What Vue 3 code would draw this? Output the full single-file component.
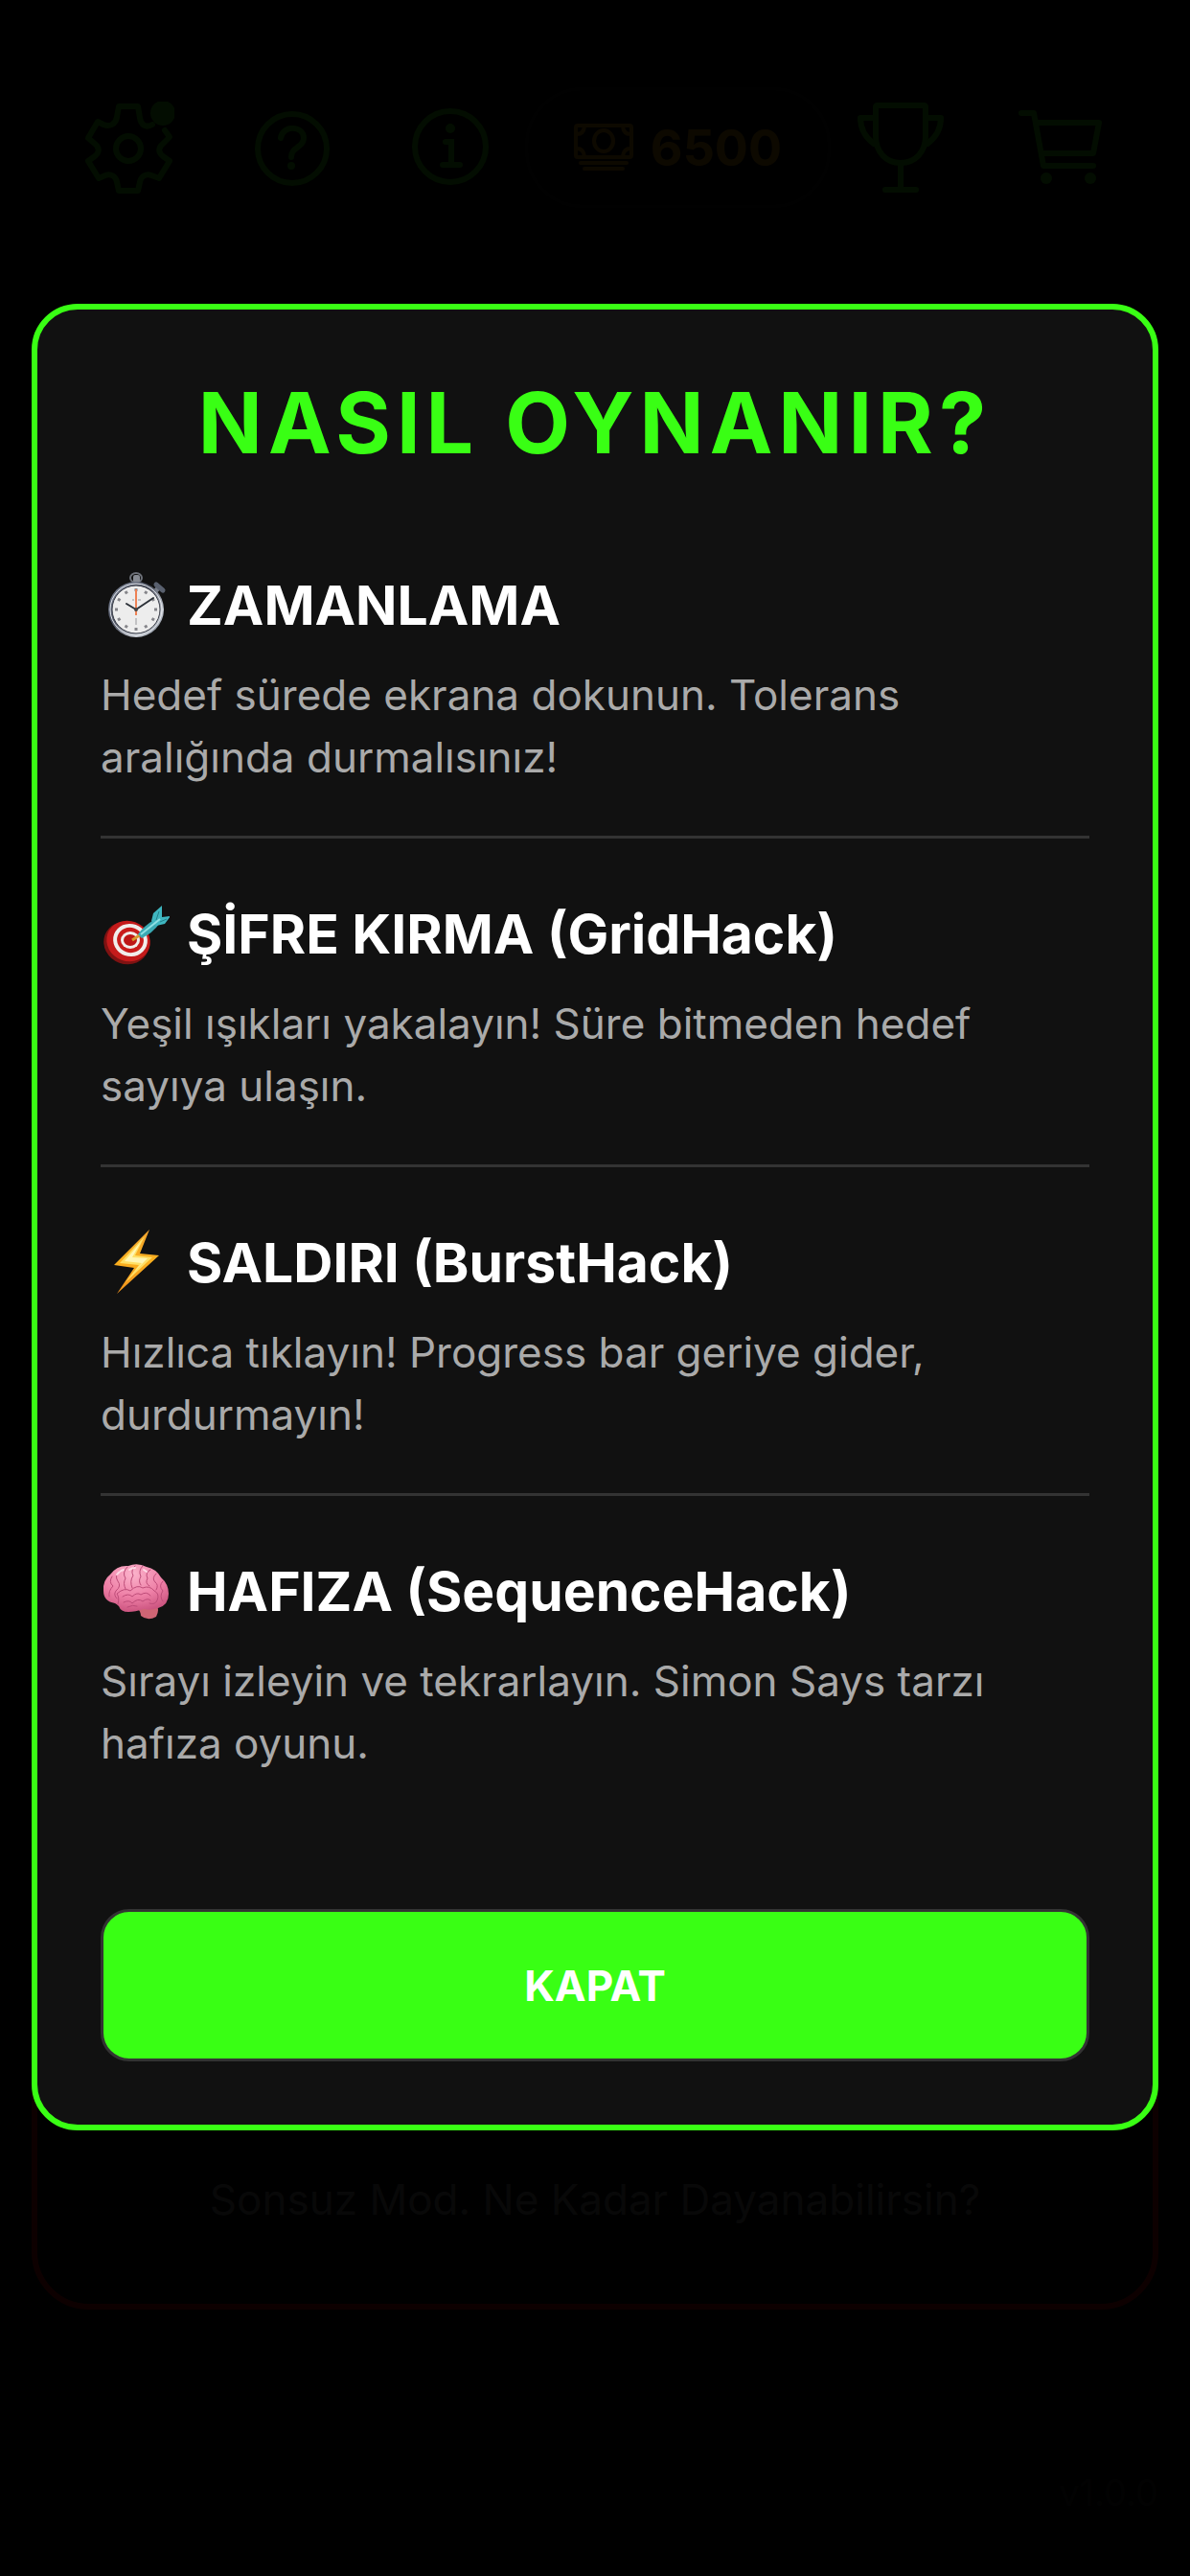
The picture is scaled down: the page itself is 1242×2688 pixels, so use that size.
<script setup>
import { ref } from 'vue'

const showHelp = ref(true)
const coins = ref(6500)

const games = [
  {
    id: 'timing',
    title: 'ZAMANLAMA',
    text: 'Hedef sürede ekrana dokunun. Tolerans aralığında durmalısınız!'
  },
  {
    id: 'grid',
    title: 'ŞİFRE KIRMA (GridHack)',
    text: 'Yeşil ışıkları yakalayın! Süre bitmeden hedef sayıya ulaşın.'
  },
  {
    id: 'burst',
    title: 'SALDIRI (BurstHack)',
    text: 'Hızlıca tıklayın! Progress bar geriye gider, durdurmayın!'
  },
  {
    id: 'sequence',
    title: 'HAFIZA (SequenceHack)',
    text: 'Sırayı izleyin ve tekrarlayın. Simon Says tarzı hafıza oyunu.'
  }
]

// Minute marks on the stopwatch face
const marks = Array.from({ length: 12 }, (_, i) => i * 30)
</script>

<template>
  <div class="screen">

    <!-- Top bar -->
    <header class="topbar">
      <div class="icon-group left">
        <button class="icon-btn" aria-label="Ayarlar">
          <svg width="96" height="96" viewBox="0 0 96 96" fill="none" stroke="currentColor" stroke-width="6" stroke-linejoin="round" stroke-linecap="round" aria-hidden="true">
            <path d="M73 24 C66 28 61 24 60 17 L58 5 H38 L36 16 C35 23 29 27 22 24 L16 21 L6 38 L13 44 C18 48 18 53 13 57 L6 62 L17 80 L24 77 C30 75 35 78 36 84 L38 93 H58 L60 84 C61 78 66 75 72 77 L80 80 L91 62 L84 57 C79 53 79 48 84 44 L91 37 L86 30" />
            <circle cx="48" cy="49" r="13" />
            <circle cx="84" cy="12" r="13" fill="currentColor" stroke="none" />
          </svg>
        </button>
        <button class="icon-btn" aria-label="Yardım" @click="showHelp = true">
          <svg width="84" height="84" viewBox="0 0 84 84" fill="none" stroke="currentColor" stroke-width="6" stroke-linecap="round" aria-hidden="true">
            <circle cx="42" cy="43" r="36" />
            <path d="M30 32 C32 18 54 19 54 32 C54 42 41 41 41 52" />
            <circle cx="41" cy="61" r="4" fill="currentColor" stroke="none" />
          </svg>
        </button>
        <button class="icon-btn" aria-label="Bilgi">
          <svg width="84" height="84" viewBox="0 0 84 84" fill="none" stroke="currentColor" stroke-width="6" stroke-linecap="round" aria-hidden="true">
            <circle cx="42" cy="41" r="37" />
            <path d="M37 36 H43 V59 M34 60 H52" />
            <circle cx="42" cy="22" r="5" fill="currentColor" stroke="none" />
          </svg>
        </button>
      </div>
      <div class="coins">
        <svg width="62" height="50" viewBox="0 0 62 50" fill="none" stroke="currentColor" stroke-width="4" stroke-linecap="round" aria-hidden="true">
          <rect x="2" y="2" width="58" height="33" rx="2" />
          <ellipse cx="31" cy="18" rx="10" ry="11" />
          <path d="M3 11 Q10 11 11 3 M51 3 Q52 11 59 11 M3 26 Q10 26 11 34 M51 34 Q52 26 59 26" />
          <path d="M7 41 H55 M11 47 H51" />
        </svg>
        <span>{{ coins }}</span>
      </div>
      <div class="icon-group right">
        <button class="icon-btn" aria-label="Liderlik">
          <svg width="94" height="96" viewBox="0 0 94 96" fill="none" stroke="currentColor" stroke-width="6" stroke-linejoin="round" stroke-linecap="round" aria-hidden="true">
            <path d="M21 6 Q21 4 23 4 H71 Q73 4 73 6 V36 C73 52 63 64 47 64 C31 64 21 52 21 36 Z" />
            <path d="M20 17 H5 C5 30 11 38 19 44 M74 17 H89 C89 30 83 38 75 44" />
            <path d="M47 65 V92 M31 92 H63" />
          </svg>
        </button>
        <button class="icon-btn" aria-label="Mağaza">
          <svg width="90" height="84" viewBox="0 0 90 84" fill="none" stroke="currentColor" stroke-width="6" stroke-linejoin="round" stroke-linecap="round" aria-hidden="true">
            <path d="M4 6 H17 L27 61 H79 M21 16 H85 L79 48 H25" />
            <ellipse cx="30" cy="74" rx="6" ry="6" fill="currentColor" stroke="none" />
            <ellipse cx="76" cy="74" rx="6" ry="6" fill="currentColor" stroke="none" />
          </svg>
        </button>
      </div>
    </header>

    <!-- Endless mode card -->
    <section class="mode-card">
      <p class="mode-text">Sonsuz Mod. Ne Kadar Dayanabilirsin?</p>
    </section>

    <footer class="version">v1.0.0</footer>

    <!-- How to play -->
    <div v-if="showHelp" class="overlay">
      <div class="modal" role="dialog" aria-modal="true" aria-labelledby="help-title">
        <h1 id="help-title" class="modal-title">NASIL OYNANIR?</h1>

        <ul class="games">
          <li v-for="g in games" :key="g.id" class="game">
            <h2 class="game-title">
              <!-- Stopwatch -->
              <svg v-if="g.id === 'timing'" class="game-icon" viewBox="0 0 72 72" aria-hidden="true">
                <defs>
                  <linearGradient id="steel" x1="0" y1="0" x2="1" y2="1">
                    <stop offset="0" stop-color="#8a94a6" />
                    <stop offset="0.4" stop-color="#4b5060" />
                    <stop offset="0.75" stop-color="#c9ced6" />
                    <stop offset="1" stop-color="#596273" />
                  </linearGradient>
                </defs>
                <ellipse cx="37" cy="7" rx="6" ry="5" fill="none" stroke="#6c7078" stroke-width="2" />
                <rect x="34" y="4" width="7" height="8" rx="2" fill="#878b93" />
                <path d="M57 21 L61 17" stroke="#777d88" stroke-width="5" />
                <path d="M58 14 L65 20" stroke="#59606e" stroke-width="5" stroke-linecap="round" />
                <circle cx="37" cy="40" r="29" fill="url(#steel)" />
                <circle cx="37" cy="40" r="27" fill="none" stroke="#e3e6ea" stroke-width="1" />
                <circle cx="37" cy="40" r="25" fill="#ededed" stroke="#3b3e48" stroke-width="1" />
                <path
                  v-for="m in marks"
                  :key="m"
                  d="M37 18 V21"
                  :transform="`rotate(${m} 37 40)`"
                  stroke="#85858a"
                  stroke-width="3"
                />
                <path d="M33 30 H35 M39 30 H42 M37 49 V56" stroke="#c2c2c4" stroke-width="2" />
                <path d="M37 40 L27 34 M37 40 L55 28" stroke="#2c3138" stroke-width="2" stroke-linecap="round" />
                <path d="M37 19 V46" stroke="#ee8154" stroke-width="2" />
                <circle cx="37" cy="40" r="2" fill="#444" />
              </svg>

              <!-- Dartboard -->
              <svg v-else-if="g.id === 'grid'" class="game-icon" viewBox="0 0 72 72" aria-hidden="true">
                <ellipse cx="27" cy="45" rx="24" ry="22" transform="rotate(20 27 45)" fill="#7f1212" />
                <ellipse cx="29" cy="43" rx="23" ry="21" transform="rotate(20 29 43)" fill="#c41b1b" />
                <ellipse cx="31" cy="42" rx="18" ry="17" transform="rotate(20 31 42)" fill="#f1eeec" />
                <ellipse cx="31" cy="42" rx="14" ry="13" transform="rotate(20 31 42)" fill="#c91d1c" />
                <ellipse cx="31" cy="42" rx="10" ry="9" fill="#f1eeec" />
                <ellipse cx="31" cy="42" rx="7" ry="6" fill="#bd1717" />
                <path d="M33 42 L42 36" stroke="#d69a2c" stroke-width="3" />
                <path d="M39 36 Q44 28 57 20 L62 24 Q54 35 43 40 Z" fill="#3aa9b3" />
                <path d="M53 22 L55 14 L64 6 L64 18 L73 17 L67 25 L58 27 Z" fill="#3fb6c0" />
                <path d="M42 36 L62 20" stroke="#8fe0e4" stroke-width="2" />
                <path d="M58 21 L61 12 M62 23 L69 20" stroke="#23808a" stroke-width="1" />
              </svg>

              <!-- Lightning bolt -->
              <svg v-else-if="g.id === 'burst'" class="game-icon" viewBox="0 0 72 72" aria-hidden="true">
                <defs>
                  <linearGradient id="bolt" x1="0" y1="0" x2="0" y2="1">
                    <stop offset="0" stop-color="#f2a22e" />
                    <stop offset="0.5" stop-color="#fbb01e" />
                    <stop offset="1" stop-color="#ee8f1d" />
                  </linearGradient>
                </defs>
                <path d="M51 1 L14 38 L35 41 L17 68 L61 28 L41 26 Z" fill="url(#bolt)" />
                <path d="M46 8 L20 36 L40 38 L26 56 L54 30 L36 28 Z" fill="#ffe065" />
                <path d="M42 14 L25 34 L43 36 L36 44 L49 31 L33 30 Z" fill="#fff6b4" />
              </svg>

              <!-- Brain -->
              <svg v-else class="game-icon" viewBox="0 0 72 72" aria-hidden="true">
                <defs>
                  <radialGradient id="brain" cx="0.45" cy="0.2" r="0.8">
                    <stop offset="0" stop-color="#fbb3cb" />
                    <stop offset="0.6" stop-color="#ee7fa6" />
                    <stop offset="1" stop-color="#cc5580" />
                  </radialGradient>
                </defs>
                <path d="M38 52 Q42 57 42 61 Q49 67 58 62 Q62 55 58 47 Z" fill="#cf6574" />
                <path d="M15 48 Q3 46 3 35 Q2 24 10 18 Q17 8 29 9 Q38 5 48 10 Q58 12 63 21 Q71 28 71 38 Q71 50 60 53 Q52 56 45 54 Q36 57 29 57 Q21 57 19 51 Q17 49 15 48 Z" fill="url(#brain)" />
                <g fill="none" stroke="#bd4c78" stroke-width="1" stroke-linecap="round">
                  <path d="M12 20 Q8 26 13 30 Q8 35 9 41 M20 14 Q14 19 18 25 Q22 30 16 35 Q13 39 17 43" />
                  <path d="M28 10 Q22 16 26 22 Q23 27 26 33 M36 9 Q31 14 34 19 Q30 25 33 32 M44 9 Q39 14 42 20 Q39 25 42 29" />
                  <path d="M52 13 Q46 16 49 22 Q46 27 51 30 M58 17 Q53 22 57 26 Q61 29 58 34 M65 25 Q60 30 65 35 Q61 41 65 46" />
                  <path d="M18 49 Q20 42 17 38 Q25 31 31 35 Q38 28 44 32 Q51 29 56 35 Q62 38 59 45 Q57 50 51 48" />
                  <path d="M23 41 Q29 37 33 41 Q38 36 42 39 Q48 35 52 40 M24 47 Q30 44 33 48 Q39 42 44 46 Q49 42 52 45 M28 52 Q34 49 38 51" />
                </g>
                <path d="M17 18 Q20 14 24 13 M30 13 Q33 11 36 11 M45 13 L48 15" fill="none" stroke="#ffd9e6" stroke-width="2" stroke-linecap="round" />
              </svg>
              <span>{{ g.title }}</span>
            </h2>
            <p class="game-text">{{ g.text }}</p>
          </li>
        </ul>

        <button class="close-btn" @click="showHelp = false">KAPAT</button>
      </div>
    </div>

  </div>
</template>

<style>
body {
  margin: 0;
  background: #000;
}
</style>

<style scoped>
.screen {
  position: relative;
  box-sizing: border-box;
  display: flex;
  flex-direction: column;
  min-height: 100vh;
  padding: 91px 33px 54px;
  background: #000;
  font-family: Inter, 'Noto Sans', sans-serif;
}

/* Top bar */
.topbar {
  display: flex;
  align-items: center;
  padding: 0 57px 0 53px;
  color: #39ff14;
}
.icon-group {
  display: flex;
  align-items: center;
}
.icon-group.left  { gap: 81px; }
.icon-group.right { gap: 75px; }
.icon-btn {
  display: flex;
  padding: 0;
  border: none;
  background: none;
  color: inherit;
  cursor: pointer;
}
.coins {
  display: flex;
  align-items: center;
  gap: 18px;
  box-sizing: border-box;
  height: 126px;
  margin: 0 26px 0 auto;
  padding: 0 48px;
  border: 3px solid #222;
  border-radius: 60px;
  background: #111;
  color: #ffaa00;
  font-size: 52px;
  font-weight: 700;
}

/* Endless mode card */
.mode-card {
  box-sizing: border-box;
  display: flex;
  align-items: flex-end;
  justify-content: center;
  min-height: 420px;
  margin-top: auto;
  padding: 76px;
  border: 6px solid #ff0000;
  border-radius: 60px;
}
.mode-text {
  margin: 0;
  font-size: 44px;
  line-height: 65px;
  color: #999;
}
.version {
  margin-top: 158px;
  font-size: 38px;
  line-height: 66px;
  text-align: right;
  color: #333;
}

/* Modal */
.overlay {
  position: absolute;
  inset: 0;
  box-sizing: border-box;
  padding: 317px 33px 0;
  background: rgba(0, 0, 0, 0.95);
}
.modal {
  display: flex;
  flex-direction: column;
  padding: 66px;
  border: 6px solid #39ff14;
  border-radius: 48px;
  background: #111;
}
.modal-title {
  margin: 0 0 102px;
  font-size: 88px;
  font-weight: 700;
  line-height: 105px;
  letter-spacing: 6px;
  text-align: center;
  color: #39ff14;
}

/* Game list */
.games {
  margin: 0 0 140px;
  padding: 0;
  list-style: none;
}
.game + .game {
  margin-top: 49px;
  padding-top: 64px;
  border-top: 3px solid #333;
}
.game-title {
  display: flex;
  align-items: center;
  gap: 18px;
  margin: 0 0 25px;
  font-size: 57px;
  font-weight: 700;
  line-height: 72px;
  color: #fff;
}
.game-icon {
  flex-shrink: 0;
  width: 72px;
  height: 72px;
}
.game-text {
  margin: 0;
  font-size: 44px;
  line-height: 65px;
  color: #aaa;
}

.close-btn {
  height: 159px;
  border: 3px solid #333;
  border-radius: 30px;
  background: #39ff14;
  color: #fff;
  font-family: inherit;
  font-size: 44px;
  font-weight: 700;
  cursor: pointer;
}
</style>
